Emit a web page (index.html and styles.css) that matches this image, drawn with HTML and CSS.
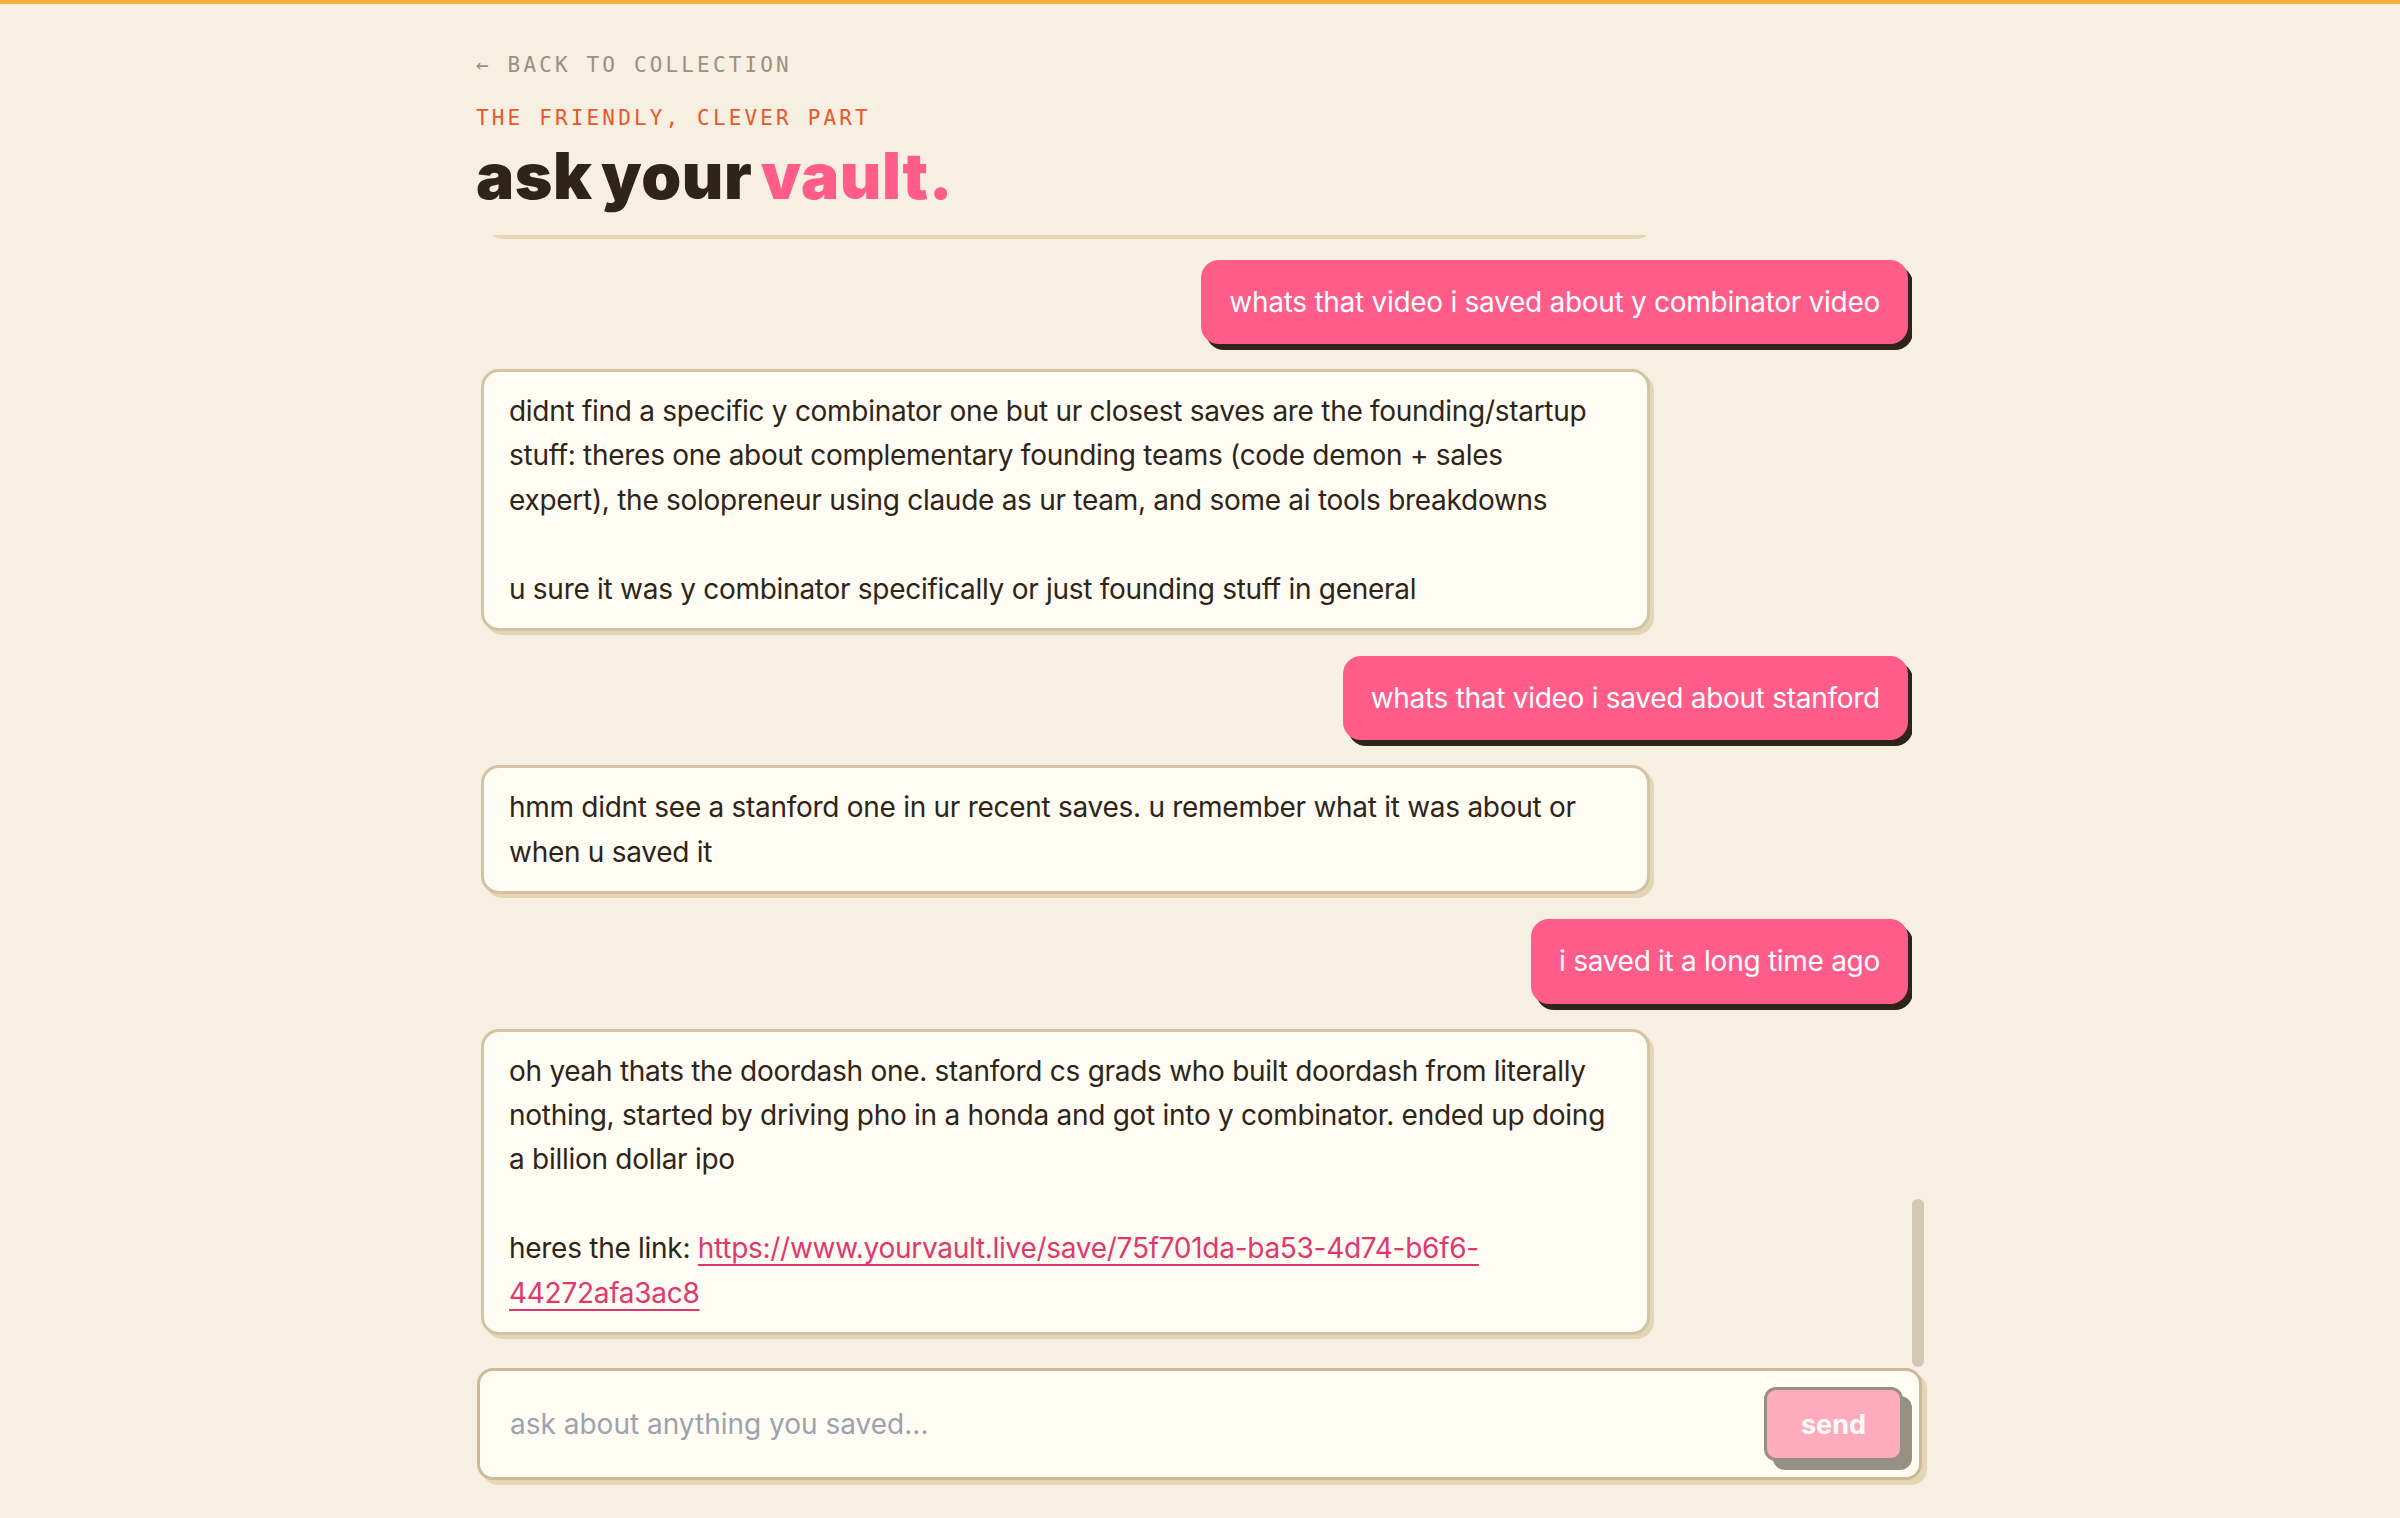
FILE: index.html
```html
<!DOCTYPE html>
<html>
<head>
    <meta charset="utf-8">
    <title>ask your vault</title>
    <link rel="stylesheet" href="styles.css">
</head>
<body>

<div class="topbar"></div>

<main class="page">
    <a class="back" href="#">← back to collection</a>
    <p class="eyebrow">the friendly, clever part</p>
    <h1 class="title">ask your <span class="accent">vault.</span></h1>

    <div class="chat-wrap">
        <section class="chat">
            <div class="messages">
                <div class="msg user">hey what can u do</div>
                <div class="msg bot">i can dig through everything u saved to ur vault. videos, threads, articles, recipes, all of it

ask me stuff like "what was that pasta recipe" or "show me the productivity videos" and ill find the closest saves

i can also sum up what a save was about if u forgot why u saved it</div>
                <div class="msg user">what did i save this week</div>
                <div class="msg bot">this week u saved 6 things: a sourdough starter guide, two videos on cold email outreach, a thread about notion templates, a gym split for beginners, and a short clip on how to negotiate salary

want me to break any of those down</div>
                <div class="msg user">the cold email ones</div>
                <div class="msg bot">first one is about writing subject lines that dont look like sales. keep it under 5 words, lowercase, sound like a friend

second one is a full teardown of a cold email that got a reply from a vc. short intro, one specific compliment, one clear ask, no attachments

both say the same thing basically: be short and be specific</div>
                <div class="msg user">nice. anything about productivity</div>
                <div class="msg bot">yeah a bunch. the biggest ones are the time blocking video, the one about doing ur hardest task before checking ur phone, and a thread on the 2 minute rule

theres also an older save about building a second brain in notion if thats more ur thing</div>
                <div class="msg user">what was the 2 minute rule again</div>
                <div class="msg bot">if something takes less than 2 minutes just do it right away instead of putting it on a list. the thread also says to use it to start habits, like only committing to 2 minutes of reading a night</div>
                <div class="msg user">ok what about recipes</div>
                <div class="msg bot">u saved a lot of recipes lol. the most recent ones are a creamy gochujang pasta, a 15 minute chicken fried rice, overnight oats with peanut butter, and that sourdough starter guide

the gochujang pasta one has the most views if u want the crowd favorite</div>
                <div class="msg user">send me the pasta one</div>
                <div class="msg bot">here u go: creamy gochujang pasta, takes about 20 minutes. u need gochujang, butter, garlic, heavy cream and parmesan

cook the pasta, fry the garlic in butter, stir in the gochujang and cream, then toss it all with the parmesan and a splash of pasta water</div>
                <div class="msg user">do i have anything on investing</div>
                <div class="msg bot">a few things. theres a video explaining index funds like ur 5, one about why u shouldnt pick individual stocks, and a thread on how compound interest actually works with real numbers

nothing on crypto tho if thats what ur looking for</div>
                <div class="msg user">which one was the first 10 customers</div>
                <div class="msg bot">its a talk about doing things that dont scale. the founder says to personally reach out to every early user, onboard them by hand, and fix whatever they complain about the same day

he says ur first 10 customers should basically feel like friends</div>
                <div class="msg user">anything from that talk about fundraising</div>
                <div class="msg bot">not really, that one is mostly about customers. the closest thing to fundraising is the cold email teardown, since the reply came from a vc

want me to look for anything else</div>

                <div class="msg user">whats that video i saved about y combinator video</div>
                <div class="msg bot">didnt find a specific y combinator one but ur closest saves are the founding/startup stuff: theres one about complementary founding teams (code demon + sales<br>expert), the solopreneur using claude as ur team, and some ai tools breakdowns

u sure it was y combinator specifically or just founding stuff in general</div>
                <div class="msg user">whats that video i saved about stanford</div>
                <div class="msg bot">hmm didnt see a stanford one in ur recent saves. u remember what it was about or when u saved it</div>
                <div class="msg user">i saved it a long time ago</div>
                <div class="msg bot">oh yeah thats the doordash one. stanford cs grads who built doordash from literally nothing, started by driving pho in a honda and got into y combinator. ended up doing a billion dollar ipo

heres the link: <a href="https://www.yourvault.live/save/75f701da-ba53-4d74-b6f6-44272afa3ac8">https://www.yourvault.live/save/75f701da-ba53-4d74-b6f6-<wbr>44272afa3ac8</a></div>
            </div>
        </section>
        <div class="scrollbar"><div class="thumb"></div></div>
    </div>

    <form class="composer" onsubmit="return false">
        <input type="text" placeholder="ask about anything you saved...">
        <button type="submit" disabled>send</button>
    </form>
</main>

</body>
</html>
```

FILE: styles.css
```css
html, body {
    margin: 0;
    height: 100%;
}

body {
    display: flex;
    flex-direction: column;
    height: 100vh;
    background-color: #f6efe2;
    color: #2e2418;
    font-family: Inter, "Noto Sans", sans-serif;
}

.topbar {
    flex-shrink: 0;
    height: 4px;
    background-color: #f5b13c;
}

.page {
    flex: 1;
    min-height: 0;
    width: 1448px;
    margin: 0 auto;
    padding: 51px 0 38px;
    box-sizing: border-box;
    display: flex;
    flex-direction: column;
}

/* mono labels above the title */
.back, .eyebrow {
    display: block;
    margin: 0;
    font-family: "DejaVu Sans Mono", monospace;
    font-size: 21px;
    line-height: 20px;
    letter-spacing: 0.15em;
    text-transform: uppercase;
}

.back {
    color: #9c907f;
    text-decoration: none;
}

.eyebrow {
    margin-top: 33px;
    color: #e8582a;
}

.title {
    margin: 16px 0 0;
    font-size: 64px;
    line-height: 64px;
    font-weight: 900;
    letter-spacing: 0.01em;
    word-spacing: -5px;
}

.accent {
    color: #ff5c8a;
}

/* chat log + its scrollbar rail */
.chat-wrap {
    flex: 1;
    min-height: 0;
    margin-top: 27px;
    display: flex;
}

.chat {
    flex: 1;
    min-width: 0;
    overflow-y: auto;
    scrollbar-width: none;
    display: flex;
    flex-direction: column-reverse;
}

.chat::-webkit-scrollbar {
    display: none;
}

.scrollbar {
    width: 12px;
    display: flex;
    flex-direction: column;
    justify-content: flex-end;
    padding-bottom: 1px;
}

.thumb {
    height: 168px;
    background-color: #d3c8b4;
    border-radius: 6px;
}

.messages {
    display: flex;
    flex-direction: column;
    gap: 25px;
    padding: 4px 4px 33px 5px;
}

.msg {
    box-sizing: border-box;
    max-width: 1169px;
    padding: 17px 25px;
    border: 3px solid;
    border-radius: 18px;
    font-size: 28px;
    line-height: 44.4px;
    letter-spacing: -0.01em;
    white-space: pre-wrap;
    overflow-wrap: anywhere;
}

.msg.bot {
    align-self: flex-start;
    background-color: #fffcf3;
    border-color: #d3c3a3;
    box-shadow: 4px 4px 0 #e4d5b5;
}

.msg.user {
    align-self: flex-end;
    background-color: #ff5c8a;
    border-color: #ff5c8a;
    color: #fff;
    box-shadow: 5px 6px 0 #2e2418;
}

.msg a {
    color: #e0386e;
    text-decoration: underline;
    text-decoration-thickness: 2px;
    text-underline-offset: 6px;
}

/* input row */
.composer {
    flex-shrink: 0;
    display: flex;
    align-items: center;
    margin: 0 2px 0 1px;
    padding: 16px;
    background-color: #fffcf3;
    border: 3px solid #cdb997;
    border-radius: 16px;
    box-shadow: 5px 5px 0 #e4d5b5;
}

.composer input {
    flex: 1;
    min-width: 0;
    padding: 0 0 0 14px;
    border: none;
    outline: none;
    background: transparent;
    color: #2e2418;
    font-family: inherit;
    font-size: 28px;
}

.composer input::placeholder {
    color: #9ca3af;
}

.composer button {
    width: 139px;
    height: 74px;
    background-color: #ff5c8a;
    color: #fff;
    border: 3px solid #2e2418;
    border-radius: 12px;
    box-shadow: 9px 9px 0 #2e2418;
    font-family: inherit;
    font-size: 27px;
    font-weight: 700;
    cursor: pointer;
}

.composer button:disabled {
    opacity: 0.5;
    cursor: default;
}
```
